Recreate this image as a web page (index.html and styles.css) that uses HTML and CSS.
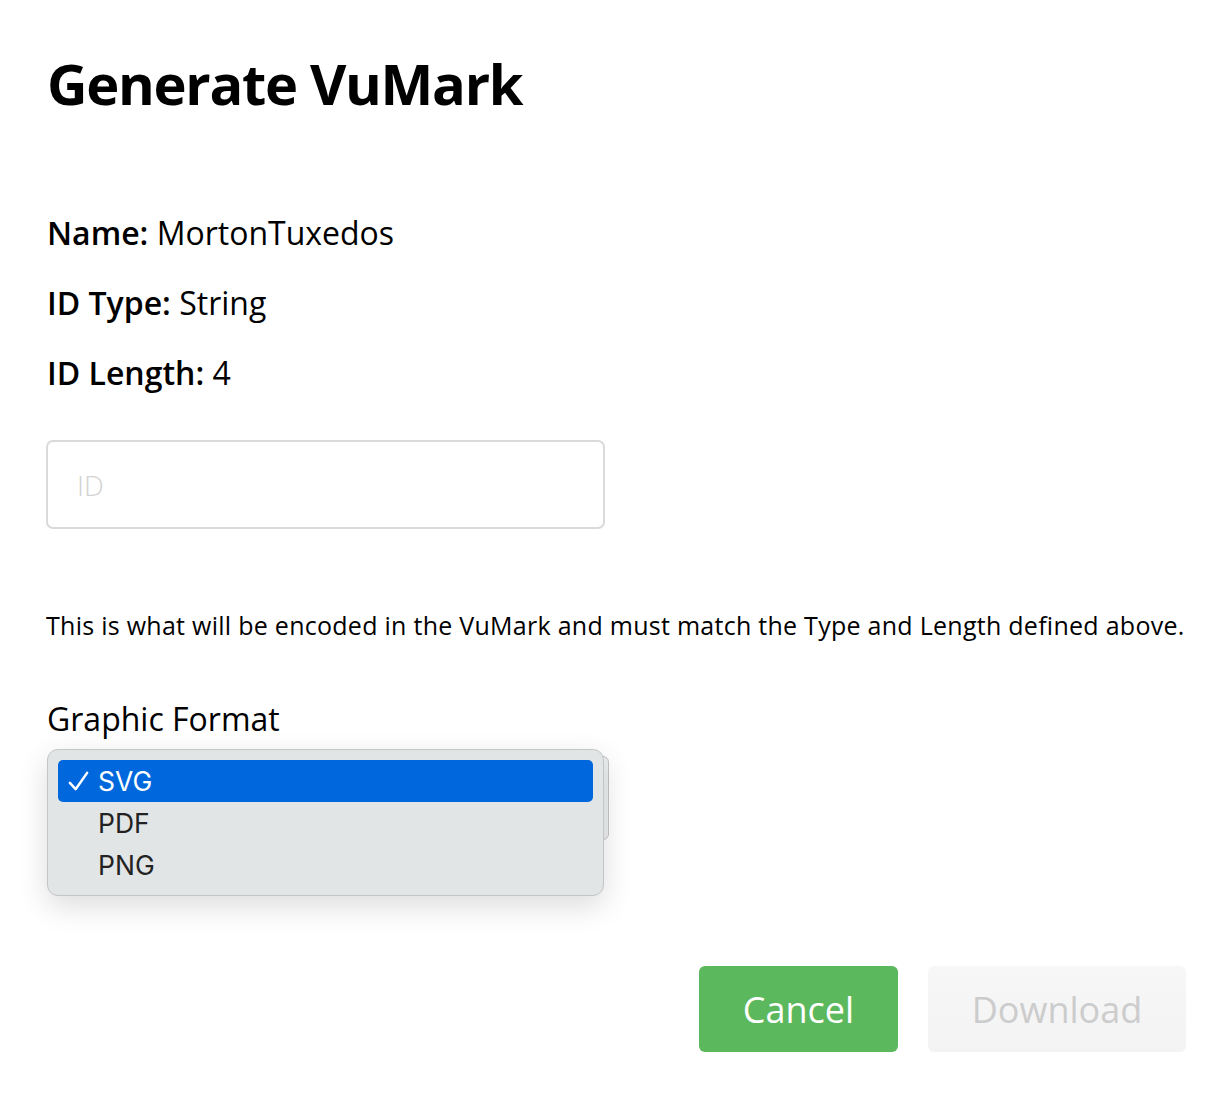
FILE: index.html
```html
<!DOCTYPE html>
<html lang="en">
<head>
<meta charset="utf-8">
<title>Generate VuMark</title>
<link rel="stylesheet" href="styles.css">
</head>
<body>
<main class="page">
  <h1 class="title">Generate VuMark</h1>
  <div class="info">
    <p class="info-row"><b>Name:</b> MortonTuxedos</p>
    <p class="info-row"><b>ID Type:</b> String</p>
    <p class="info-row"><b>ID Length:</b> 4</p>
  </div>
  <input class="id-input" type="text" placeholder="ID">
  <p class="hint">This is what will be encoded in the VuMark and must match the Type and Length defined above.</p>
  <label class="field-label">Graphic Format</label>
  <div class="select-wrap">
    <div class="select-box"></div>
    <ul class="popup">
      <li class="opt selected"><span class="check"><svg viewBox="0 0 24 24" width="23" height="23"><path d="M3 13.5 L9 20 L21 3" fill="none" stroke="currentColor" stroke-width="2.6" stroke-linecap="round" stroke-linejoin="round"/></svg></span>SVG</li>
      <li class="opt"><span class="check"></span>PDF</li>
      <li class="opt"><span class="check"></span>PNG</li>
    </ul>
  </div>
  <div class="actions">
    <button class="btn btn-cancel">Cancel</button>
    <button class="btn btn-download" disabled>Download</button>
  </div>
</main>
</body>
</html>
```
FILE: styles.css
```css
html, body {
  margin: 0;
  padding: 0;
  background: #fff;
}
body {
  font-family: "Open Sans", "Liberation Sans", sans-serif;
  color: #000;
}
.page {
  padding: 50px 46px 0 47px;
  display: flex;
  flex-direction: column;
}
.title {
  margin: 0;
  font-size: 56px;
  line-height: 67px;
  font-weight: 700;
  letter-spacing: -1.3px;
}
.info {
  margin-top: 81px;
}
.info-row {
  margin: 0;
  font-size: 32px;
  line-height: 70px;
}
.info-row b {
  font-weight: 600;
}
.id-input {
  margin-top: 32px;
  width: 559px;
  height: 89px;
  box-sizing: border-box;
  margin-left: -1px;
  border: 2px solid #d9dadc;
  border-radius: 7px;
  padding: 0 0 0 29px;
  font-family: "Open Sans", sans-serif;
  font-size: 28px;
  outline: none;
}
.id-input::placeholder {
  color: #d2d2d2;
  font-weight: 300;
}
.hint {
  margin: 76px 0 0 -1px;
  font-size: 25px;
  line-height: 40px;
  letter-spacing: 0.27px;
  white-space: nowrap;
}
.field-label {
  margin-top: 52px;
  font-size: 32px;
  line-height: 44px;
}
.select-wrap {
  position: relative;
  margin-top: 8px;
  height: 150px;
}
.select-box {
  width: 562px;
  height: 84px;
  box-sizing: border-box;
  margin-top: 7px;
  border: 1px solid #c4c4c4;
  border-radius: 6px;
  background: #eceef0;
}
.popup {
  position: absolute;
  left: 0;
  top: 0;
  width: 557px;
  height: 147px;
  box-sizing: border-box;
  margin: 0;
  padding: 10px 10px;
  list-style: none;
  background: #e2e5e6;
  border: 1px solid #c3c5c6;
  border-radius: 11px;
  box-shadow: 0 10px 30px rgba(0, 0, 0, 0.14);
  font-family: Inter, "Liberation Sans", sans-serif;
  font-size: 26.5px;
  color: #222;
}
.opt {
  display: flex;
  align-items: center;
  height: 42px;
  padding-left: 9px;
  border-radius: 5px;
}
.opt.selected {
  background: #0068dc;
  color: #fff;
}
.check {
  display: inline-flex;
  align-items: center;
  width: 31px;
}
.actions {
  display: flex;
  justify-content: flex-end;
  gap: 30px;
  margin-top: 67px;
}
.btn {
  height: 86px;
  border: none;
  border-radius: 6px;
  font-family: "Open Sans", sans-serif;
  font-size: 36px;
  padding: 0;
}
.btn-cancel {
  width: 199px;
  background: #5cb85c;
  color: #fff;
}
.btn-download {
  width: 258px;
  background: linear-gradient(#f7f7f7, #f3f3f3);
  color: #cccccc;
}
```
